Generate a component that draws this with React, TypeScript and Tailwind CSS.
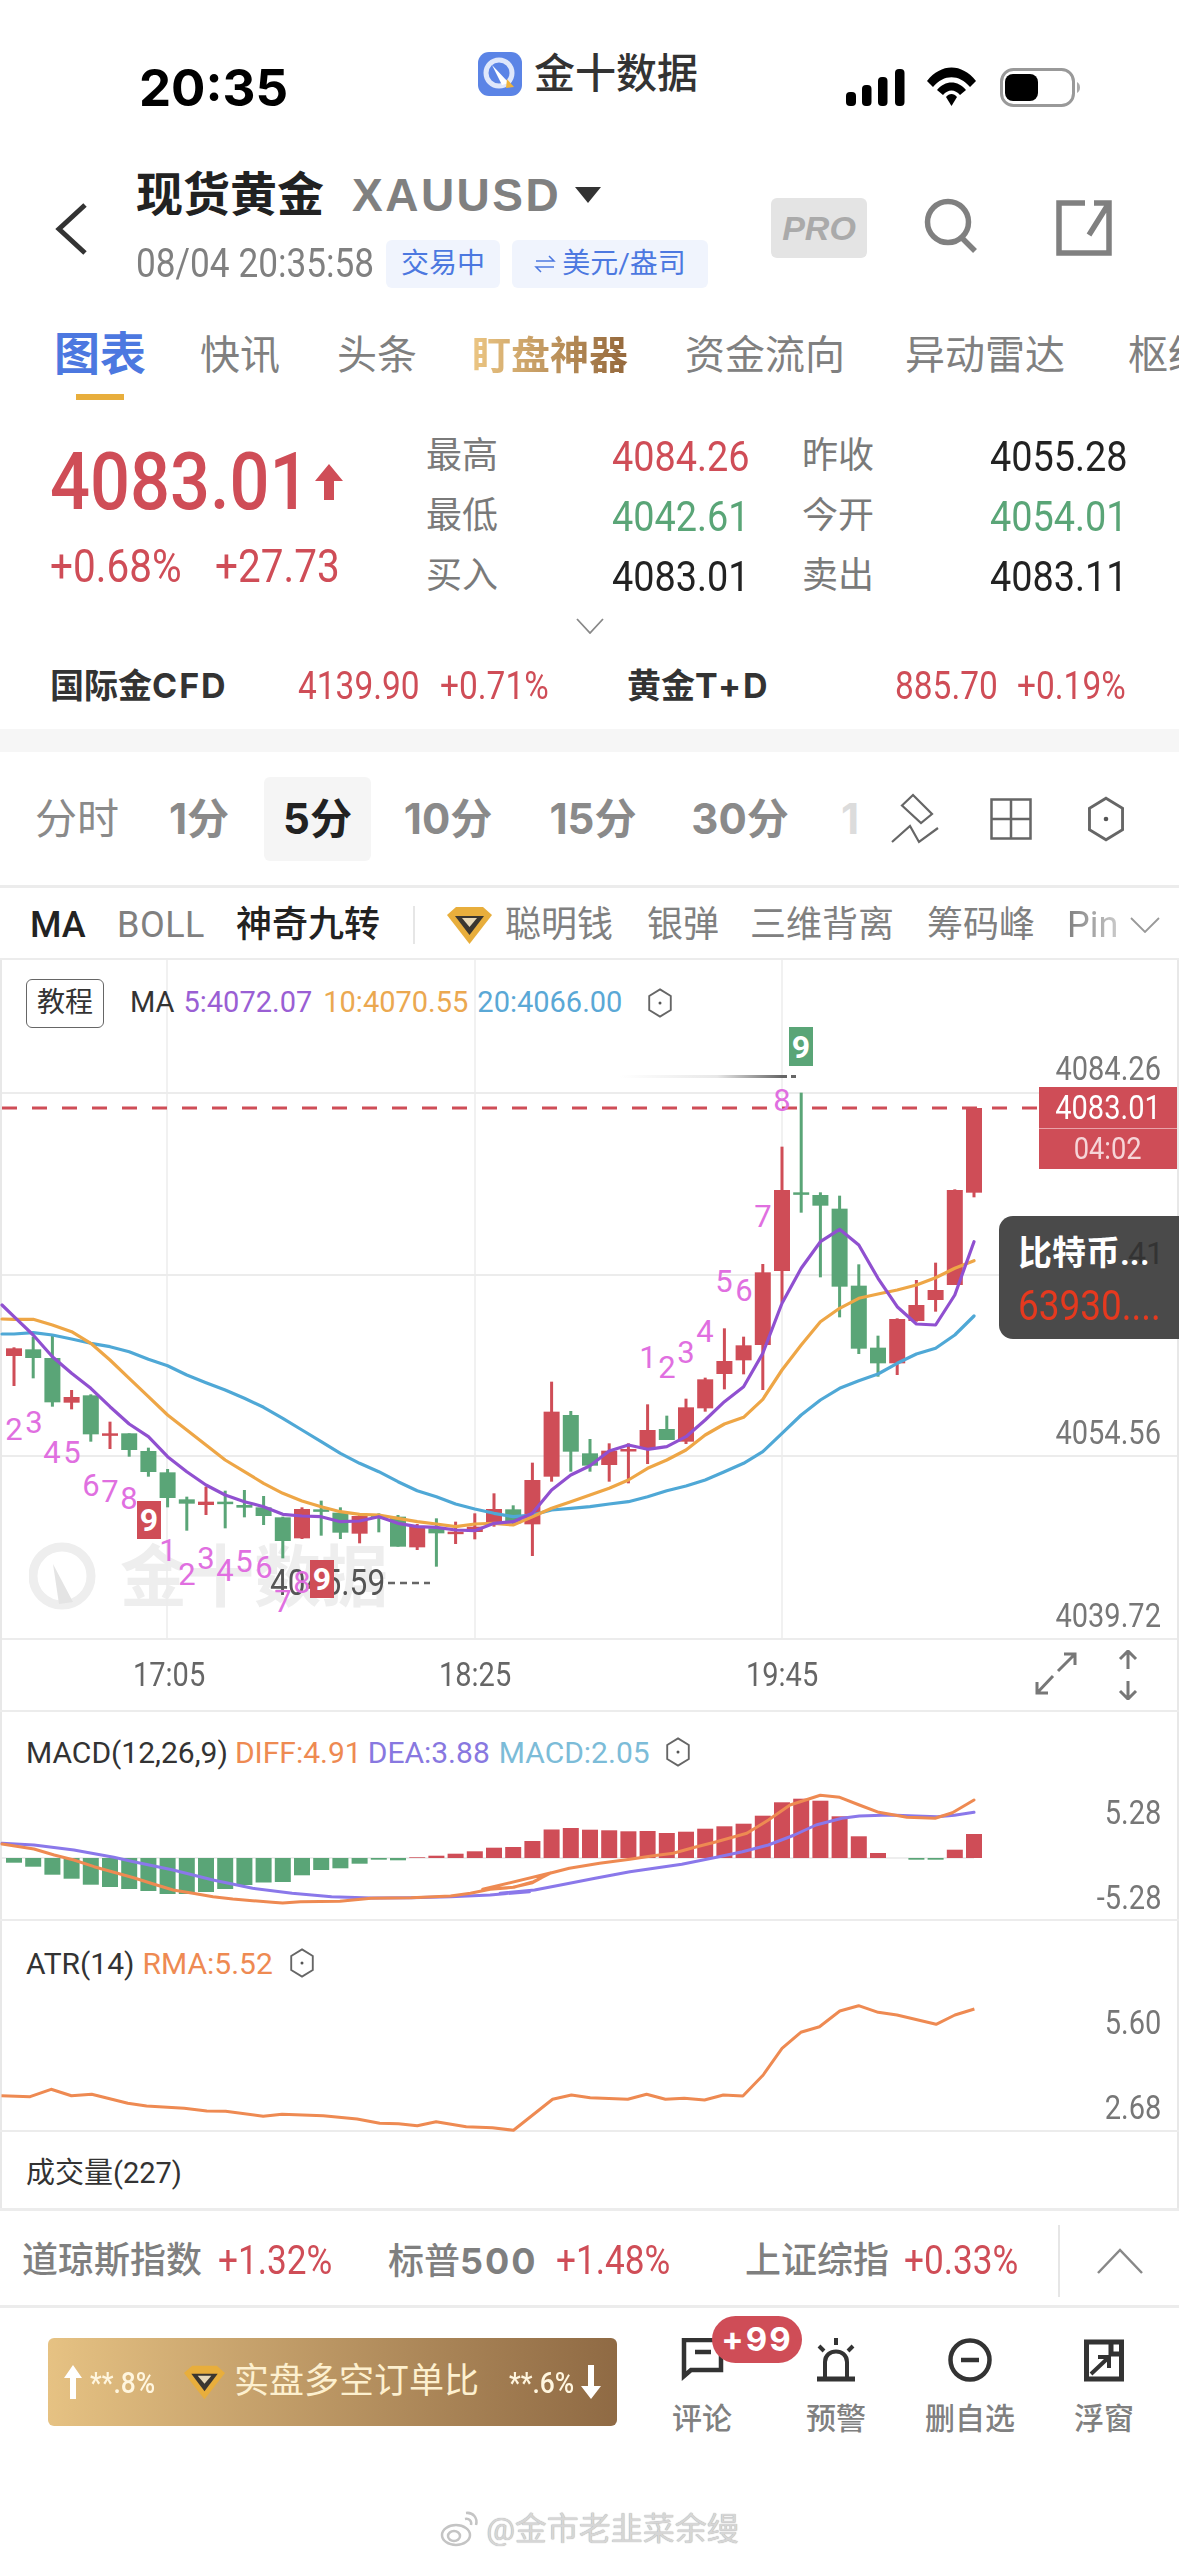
import React from "react";

const RED = "#cf4d57";
const GREEN = "#5aa577";

// y values below are (pageY - 1300) * 3, read off the reference
const candles: [number, number, number, number, number][] = [
  [1, 142, 145, 168, 258], [0, 110, 148, 174, 235], [0, 105, 174, 307, 320], [1, 270, 291, 308, 328],
  [0, 283, 286, 403, 425], [1, 365, 400, 404, 447], [0, 400, 400, 450, 470], [0, 443, 453, 516, 530],
  [0, 507, 517, 594, 622], [0, 590, 598, 611, 692], [1, 560, 605, 615, 645], [0, 572, 605, 612, 685],
  [0, 570, 615, 623, 652], [0, 588, 622, 648, 675], [0, 650, 652, 723, 775], [1, 622, 627, 715, 717],
  [0, 602, 628, 632, 707], [0, 622, 638, 698, 717], [1, 645, 648, 701, 730], [0, 640, 645, 650, 697],
  [0, 645, 650, 740, 740], [1, 672, 678, 742, 750], [0, 655, 685, 700, 800], [1, 665, 695, 702, 732],
  [1, 640, 680, 696, 718], [1, 580, 627, 668, 680], [0, 616, 628, 670, 672], [1, 488, 540, 673, 768],
  [1, 245, 335, 530, 545], [0, 333, 345, 455, 515], [0, 417, 460, 497, 515], [1, 430, 452, 495, 545],
  [1, 430, 447, 449, 550], [1, 313, 390, 445, 492], [0, 347, 387, 420, 420], [1, 296, 322, 425, 432],
  [1, 233, 238, 325, 335], [1, 85, 183, 222, 268], [1, 110, 136, 181, 223], [1, -108, -83, 135, 270],
  [1, -460, -330, -87, 8], [0, -622, -323, -321, -262], [0, -323, -315, -283, -68], [0, -313, -274, -40, 52],
  [0, -107, -43, 146, 162], [0, 107, 143, 190, 230], [1, 55, 57, 190, 225], [1, -60, 15, 63, 65],
  [1, -112, -30, 0, 35], [1, -332, -330, -45, -45], [1, -578, -576, -322, -308],
];

const purple = [50, 105, 170, 220, 265, 320, 372, 410, 470, 515, 555, 585, 605, 620, 643, 648, 650, 665, 663, 650, 670, 680, 682, 690, 692, 670, 665, 640, 570, 525, 497, 453, 435, 448, 440, 410, 360, 305, 260, 160, 10, -95, -175, -212, -165, -65, 20, 72, 75, -15, -175];
const orange = [58, 58, 75, 95, 130, 180, 235, 290, 345, 390, 435, 480, 515, 550, 580, 603, 620, 635, 643, 645, 655, 665, 672, 680, 672, 670, 675, 650, 625, 605, 585, 565, 540, 505, 480, 450, 405, 372, 352, 298, 210, 135, 65, 25, -5, -18, -30, -45, -67, -95, -118];
const blue = [102, 98, 105, 117, 130, 140, 155, 178, 197, 225, 248, 270, 295, 322, 355, 390, 425, 460, 490, 515, 545, 572, 590, 612, 627, 640, 650, 645, 630, 625, 620, 612, 605, 590, 572, 558, 540, 515, 490, 455, 400, 345, 300, 265, 242, 222, 190, 162, 145, 105, 48];

const macdBars = [-4.7, -8.7, -16.7, -20.7, -26.7, -29, -31, -33, -36, -36, -34, -31, -27, -24.5, -24, -17.3, -12, -10.3, -5.7, -1.7, -2.3, 0.7, 2.3, 4.3, 6.7, 10.3, 11, 17, 28.5, 30, 28.3, 27.7, 26.7, 27, 25, 26.3, 29.3, 31.7, 34.3, 42.3, 55.7, 59.3, 57.3, 41.7, 21.7, 5, 0, -1.7, -1.7, 8.3, 24];

const diffA = [[5, 432], [86, 447], [137, 465], [187, 480], [238, 500], [288, 517], [338, 533], [388, 552], [438, 570], [488, 580], [539, 590], [589, 597], [639, 602], [689, 607], [715, 609], [760, 605], [860, 604], [939, 595], [1040, 593], [1140, 588], [1190, 580], [1240, 568], [1300, 562], [1350, 545], [1395, 518]];
const diffB = [[-40, 868], [0, 865], [30, 862], [75, 848], [115, 820], [160, 805], [230, 790], [300, 778], [350, 768], [400, 760], [450, 742], [500, 725], [570, 700], [620, 660], [670, 615], [740, 586], [785, 592], [830, 615], [875, 637], [940, 652], [1005, 655], [1045, 638], [1095, 600]];
const deaA = [[5, 430], [86, 435], [187, 450], [288, 472], [338, 485], [438, 510], [539, 540], [639, 565], [739, 580], [839, 590], [939, 594], [1040, 593], [1140, 590], [1240, 585], [1340, 575]];
const deaB = [[0, 880], [80, 870], [140, 855], [220, 835], [300, 815], [420, 793], [500, 772], [560, 755], [620, 735], [680, 705], [730, 675], [790, 655], [830, 648], [900, 645], [960, 648], [1010, 650], [1050, 646], [1095, 637]];

const atr = [[2, 527], [40, 530], [68, 508], [95, 527], [122, 523], [170, 550], [195, 558], [245, 565], [275, 573], [300, 574], [350, 589], [375, 583], [430, 587], [475, 597], [505, 610], [530, 611], [555, 617], [580, 605], [620, 620], [655, 623], [683, 631], [735, 538], [760, 525], [785, 533], [835, 538], [860, 523], [885, 538], [910, 535], [937, 540], [962, 525], [988, 528], [1015, 465], [1040, 385], [1065, 337], [1090, 320], [1117, 273], [1142, 257], [1168, 277], [1193, 285], [1245, 313], [1270, 285], [1296, 267]];

// magic nine counters: [label, x, y]
const nines: [string, number, number][] = [
  ["2", 14, 1430], ["3", 34, 1423], ["4", 52, 1453], ["5", 72, 1453], ["6", 91, 1486], ["7", 110, 1492], ["8", 129, 1499],
  ["1", 168, 1551], ["2", 187, 1575], ["3", 206, 1559], ["4", 225, 1571], ["5", 244, 1562], ["6", 264, 1568], ["7", 283, 1602], ["8", 302, 1583],
  ["1", 648, 1358], ["2", 667, 1368], ["3", 686, 1353], ["4", 705, 1332], ["5", 724, 1282], ["6", 744, 1291], ["7", 763, 1217], ["8", 782, 1101],
];

const cx = (i: number) => 14 + 19.2 * i;
const toPath = (pts: number[][]) => pts.map((p, i) => `${i ? "L" : "M"}${p[0].toFixed(1)} ${p[1].toFixed(1)}`).join(" ");
const maPath = (vals: number[], start: number[]) =>
  toPath([start, ...vals.map((v, i) => [cx(i), 1300 + v / 3])]);

const Din = ({
  children,
  className = "",
  align = "l",
}: {
  children: React.ReactNode;
  className?: string;
  align?: "l" | "r" | "c";
}) => {
  const origin = align === "l" ? "origin-left" : align === "r" ? "origin-right" : "origin-center";
  return <span className={`inline-block whitespace-nowrap scale-x-[0.88] ${origin} ${className}`}>{children}</span>;
};

const Hex = ({ className = "" }: { className?: string }) => (
  <svg viewBox="0 0 26 32" className={className} fill="none" stroke="#666" strokeWidth="2">
    <path d="M13 1.5 24.5 8.5V23.5L13 30.5 1.5 23.5V8.5Z" />
    <circle cx="13" cy="16" r="1.6" fill="#555" stroke="none" />
  </svg>
);

const Diamond = ({ className = "" }: { className?: string }) => (
  <svg viewBox="0 0 45 37" className={className}>
    <path d="M0 8 9 0H36L45 8 22.5 37Z" fill="#e8ae3c" />
    <path d="M8 9H37L22.5 28Z" fill="#3a3630" />
    <path d="M15 11H30L22.5 20Z" fill="#e8d9b8" />
  </svg>
);

const StatusBar = () => (
  <div className="flex h-[170px] items-start">
    <div className="ml-[139px] mt-[59px] w-[339px] text-[51px] font-bold leading-[58px] text-black [font-family:Inter,sans-serif]">
      20:35
    </div>
    <div className="mt-[52px] flex h-[44px] w-[367px] items-center">
      <svg viewBox="0 0 44 44" className="h-[44px] w-[44px]">
        <rect width="44" height="44" rx="11" fill="#5b84e6" />
        <circle cx="21" cy="21" r="13" fill="none" stroke="#dfe7fb" strokeWidth="5" />
        <path d="M14 13 31 31 24 33Z" fill="#fff" />
        <path d="M29 27 36 35 28 36Z" fill="#f0b43c" />
      </svg>
      <span className="ml-[12px] text-[41px] font-medium leading-[44px] text-[#333]">金十数据</span>
    </div>
    <svg viewBox="845 60 240 55" className="mt-[60px] h-[55px] w-[240px]">
      <rect x="846" y="92" width="10" height="14" rx="4" />
      <rect x="862" y="85" width="9.5" height="21" rx="4" />
      <rect x="878" y="77" width="9.5" height="29" rx="4" />
      <rect x="895" y="69" width="9.5" height="37" rx="4" />
      <path d="M927 81C941 63 962 63 976 81L970 87C959 74 944 74 933 87Z" />
      <path d="M937 90C945 80 958 80 966 90L960 95C955 89 948 89 943 95Z" />
      <path d="M946 97C949 93 954 93 957 97L951.5 106Z" />
      <rect x="1001.5" y="69.5" width="72" height="36" rx="12" fill="none" stroke="#999" strokeWidth="3" />
      <rect x="1005" y="74" width="33" height="27" rx="8" />
      <path d="M1077 82C1081 84 1081 91 1077 93Z" fill="#aaa" />
    </svg>
  </div>
);

const Header = () => (
  <div className="flex h-[130px] items-start">
    <svg viewBox="0 0 33 52" className="ml-[55px] mt-[33px] h-[52px] w-[33px]" fill="none" stroke="#333" strokeWidth="5">
      <path d="M30 2 4 26 30 50" />
    </svg>
    <div className="ml-[48px] w-[635px]">
      <div className="flex h-[50px] items-center">
        <span className="text-[47px] font-bold leading-[50px] text-[#222]">现货黄金</span>
        <span className="ml-[28px] text-[46px] font-bold leading-[50px] tracking-[2.5px] text-[#808080] [font-family:'Liberation_Sans',sans-serif]">
          XAUUSD
        </span>
        <svg viewBox="0 0 26 16" className="ml-[14px] h-[16px] w-[26px]">
          <path d="M0 0H26L13 16Z" fill="#333" />
        </svg>
      </div>
      <div className="mt-[20px] flex h-[48px] items-center">
        <div className="w-[250px]">
          <Din className="text-[40px] leading-[48px] text-[#808080]">08/04 20:35:58</Din>
        </div>
        <span className="flex h-[48px] w-[114px] items-center justify-center rounded-[6px] bg-[#f0f4fd] text-[28px] text-[#4c78e0]">
          交易中
        </span>
        <span className="ml-[12px] flex h-[48px] w-[196px] items-center justify-center rounded-[6px] bg-[#f0f4fd] text-[28px] text-[#4c78e0]">
          <svg viewBox="0 0 22 22" className="mr-[6px] h-[22px] w-[22px]" fill="none" stroke="#4c78e0" strokeWidth="1.5">
            <path d="M2 8H20L15 3M20 14H2L7 19" />
          </svg>
          美元/盎司
        </span>
      </div>
    </div>
    <div className="mt-[28px] flex h-[60px] w-[96px] items-center justify-center rounded-[6px] bg-[#e4e4e4] text-[34px] font-bold italic text-[#aaa] [font-family:'Liberation_Sans',sans-serif]">
      PRO
    </div>
    <svg viewBox="0 0 54 56" className="ml-[57px] mt-[27px] h-[56px] w-[54px]" fill="none" stroke="#808080" strokeWidth="5.5">
      <circle cx="24" cy="25" r="20.5" />
      <path d="M38 41 51 54" />
    </svg>
    <svg viewBox="0 0 56 56" className="ml-[78px] mt-[30px] h-[56px] w-[56px]" fill="none" stroke="#808080" strokeWidth="5.5">
      <path d="M29 3H3V53H53V3H38M53 3 33 35" />
    </svg>
  </div>
);

const Tabs = () => (
  <div className="flex h-[110px] items-start gap-[57px] pl-[54px] text-[40px] leading-[50px] text-[#808080] whitespace-nowrap">
    <div className="-mr-[3px] mt-[29px] flex flex-col items-center">
      <span className="text-[46px] font-bold text-[#4c78e0]">图表</span>
      <span className="mt-[15px] h-[6px] w-[48px] bg-[#e8ae3c]" />
    </div>
    <span className="mt-[31px]">快讯</span>
    <span className="mt-[31px]">头条</span>
    <span className="-ml-[2px] mt-[31px] bg-linear-to-r from-[#ecc683] to-[#94683c] bg-clip-text text-[39px] font-bold text-transparent">
      盯盘神器
    </span>
    <span className="mt-[31px]">资金流向</span>
    <span className="ml-[3px] mt-[31px]">异动雷达</span>
    <span className="ml-[6px] mt-[31px]">枢纽</span>
  </div>
);

const quoteRows: [string, string, string, string, string, string][] = [
  ["最高", "4084.26", "text-[#cf4d57]", "昨收", "4055.28", "text-[#222]"],
  ["最低", "4042.61", "text-[#5aa577]", "今开", "4054.01", "text-[#5aa577]"],
  ["买入", "4083.01", "text-[#222]", "卖出", "4083.11", "text-[#222]"],
];

const Quote = () => (
  <div className="h-[230px] pt-[16px]">
    <div className="flex">
      <div className="w-[426px] pl-[50px]">
        <div className="flex h-[112px] items-center">
          <div className="w-[265px]">
            <Din className="text-[80px] font-medium leading-[112px] text-[#cf4d57]">4083.01</Din>
          </div>
          <svg viewBox="0 0 28 36" className="h-[36px] w-[28px]">
            <path d="M14 0 28 17H19V36H9V17H0Z" fill="#cf4d57" />
          </svg>
        </div>
        <div className="flex h-[56px] items-center text-[46px] leading-[56px] text-[#cf4d57]">
          <div className="w-[165px]">
            <Din>+0.68%</Din>
          </div>
          <Din>+27.73</Din>
        </div>
      </div>
      <div className="w-[702px]">
        {quoteRows.map((r) => (
          <div key={r[0]} className="flex h-[60px] items-center">
            <span className="w-[186px] text-[36px] text-[#7a7a7a]">{r[0]}</span>
            <div className="w-[190px]">
              <Din className={`text-[43px] ${r[2]}`}>{r[1]}</Din>
            </div>
            <span className="w-[188px] text-[36px] text-[#7a7a7a]">{r[3]}</span>
            <div className="w-[138px]">
              <Din className={`text-[43px] ${r[5]}`}>{r[4]}</Din>
            </div>
          </div>
        ))}
      </div>
    </div>
    <div className="mt-[12px] flex justify-center">
      <svg viewBox="0 0 28 16" className="h-[16px] w-[28px]" fill="none" stroke="#888" strokeWidth="1.8">
        <path d="M1 1 14 15 27 1" />
      </svg>
    </div>
  </div>
);

const SubQuote = () => (
  <div className="flex h-[89px] items-start pt-[23px] whitespace-nowrap">
    <span className="ml-[50px] w-[248px] text-[34px] font-bold leading-[46px] text-[#333]">
      国际金<span className="tracking-[2px] [font-family:Inter,sans-serif]">CFD</span>
    </span>
    <div className="w-[142px]">
      <Din className="text-[38px] leading-[46px] text-[#cf4d57]">4139.90</Din>
    </div>
    <div className="w-[187px]">
      <Din className="text-[38px] leading-[46px] text-[#cf4d57]">+0.71%</Din>
    </div>
    <span className="w-[268px] text-[34px] font-bold leading-[46px] text-[#333]">
      黄金<span className="tracking-[2px] [font-family:Inter,sans-serif]">T+D</span>
    </span>
    <div className="w-[122px]">
      <Din className="text-[38px] leading-[46px] text-[#cf4d57]">885.70</Din>
    </div>
    <Din className="text-[38px] leading-[46px] text-[#cf4d57]">+0.19%</Din>
  </div>
);

const Periods = () => (
  <div className="flex h-[136px] items-center border-b-[3px] border-[#ececec] pl-[20px] text-[42px] font-bold text-[#8a8a8a] whitespace-nowrap [font-family:Inter,'Noto_Sans_CJK_SC',sans-serif]">
    <span className="w-[114px] text-center font-normal">分时</span>
    <span className="w-[130px] text-center">1分</span>
    <span className="flex h-[84px] w-[107px] items-center justify-center rounded-[6px] bg-[#f5f5f5] text-[#222]">5分</span>
    <span className="w-[154px] text-center">10分</span>
    <span className="w-[136px] text-center">15分</span>
    <span className="w-[158px] text-center">30分</span>
    <span className="w-[62px] text-center text-[#dcdcdc]">1</span>
    <svg viewBox="890 792 50 52" className="ml-[9px] h-[52px] w-[50px]" fill="none" stroke="#666" strokeWidth="2.2">
      <path d="M902 804.5 913 794 932 813 921 822Z" />
      <path d="M892 841 910 825 919 841 938 827" />
    </svg>
    <svg viewBox="0 0 42 42" className="ml-[50px] h-[42px] w-[42px]" fill="none" stroke="#666" strokeWidth="2.5">
      <path d="M1.5 1.5H40.5V40.5H1.5ZM21 1.5V40.5M1.5 21H40.5" />
    </svg>
    <Hex className="ml-[54px] h-[46px] w-[40px]" />
  </div>
);

const Indicators = () => (
  <div className="flex h-[72px] items-center border-b-[2px] border-[#ececec] pl-[30px] pt-[4px] text-[36px] text-[#808080] whitespace-nowrap">
    <span className="w-[87px] font-medium text-[#222]">MA</span>
    <span className="w-[119px] tracking-[0.5px]">BOLL</span>
    <span className="w-[177px] font-medium text-[#222]">神奇九转</span>
    <span className="h-[38px] w-[2px] bg-[#e6e6e6]" />
    <Diamond className="ml-[32px] h-[37px] w-[45px]" />
    <span className="ml-[13px] w-[142px]">聪明钱</span>
    <span className="w-[103px]">银弹</span>
    <span className="w-[177px]">三维背离</span>
    <span className="w-[140px]">筹码峰</span>
    <span className="w-[63px] bg-linear-to-r from-[#808080] to-[#dddddd] bg-clip-text text-transparent">Pin</span>
    <svg viewBox="0 0 30 16" className="h-[16px] w-[30px]" fill="none" stroke="#999" strokeWidth="1.8">
      <path d="M1 1 15 15 29 1" />
    </svg>
  </div>
);

const PriceChart = () => (
  <div className="relative h-[752px] border-b-[2px] border-[#ececec] shadow-[inset_2px_0_0_#e8e8e8,inset_-2px_0_0_#e8e8e8]">
    {/* watermark sits under the candles */}
    <div className="absolute left-[29px] top-[582px] flex items-center">
      <svg viewBox="0 0 67 72" className="h-[72px] w-[67px]" fill="none" stroke="#eeeeee" strokeWidth="9">
        <circle cx="33" cy="34" r="29" />
        <path d="M24 22 44 60 30 62Z" fill="#e4e4e4" stroke="none" />
      </svg>
      <span className="ml-[24px] text-[67px] font-bold leading-[72px] text-[#eeeeee]">金十数据</span>
    </div>
    <svg viewBox="0 960 1179 752" className="absolute left-0 top-0 h-[752px] w-[1179px]">
      {[167, 475, 782].map((x) => (
        <line key={x} x1={x} x2={x} y1="960" y2="1639" stroke="#ececec" strokeWidth="1.5" />
      ))}
      {[1093, 1275, 1456, 1639].map((y) => (
        <line key={y} x1="2" x2="1177" y1={y} y2={y} stroke="#ececec" strokeWidth="2" />
      ))}
      <line x1="2" x2="1039" y1="1108" y2="1108" stroke={RED} strokeWidth="3" strokeDasharray="15 15" />
      <defs>
        <linearGradient id="fade" x1="0" x2="1" y1="0" y2="0">
          <stop offset="0" stopColor="#ffffff" />
          <stop offset="0.6" stopColor="#e8e8e8" />
          <stop offset="1" stopColor="#666666" />
        </linearGradient>
      </defs>
      <rect x="620" y="1075" width="162" height="3" fill="url(#fade)" />
      <line x1="782" x2="796" y1="1076.5" y2="1076.5" stroke="#666" strokeWidth="3" strokeDasharray="5 4" />
      {candles.map(([up, wt, bt, bb, wb], i) => {
        const c = up ? RED : GREEN;
        const x = cx(i);
        return (
          <g key={i}>
            <rect x={x - 1.5} width="3" y={1300 + wt / 3} height={(wb - wt) / 3} fill={c} />
            <rect x={x - 8} width="16" y={1300 + bt / 3} height={Math.max((bb - bt) / 3, 2.5)} fill={c} />
          </g>
        );
      })}
      <g fill="none" strokeWidth="3.2" strokeLinejoin="round" strokeLinecap="round">
        <path d={maPath(blue, [2, 1334])} stroke="#4fa8d6" />
        <path d={maPath(orange, [2, 1319])} stroke="#eea646" />
        <path d={maPath(purple, [2, 1305])} stroke="#9050d0" />
      </g>
      <line x1="388" x2="430" y1="1583" y2="1583" stroke="#666" strokeWidth="2.5" strokeDasharray="7 5" />
    </svg>
    <span className="absolute left-[270px] top-[603px] text-[36px] leading-[40px] text-[#555]">
      <Din>4045.59</Din>
    </span>
    {nines.map(([n, x, y], i) => (
      <span
        key={i}
        className="absolute w-[24px] -translate-x-1/2 -translate-y-1/2 text-center text-[31px] leading-[30px] text-[#e06fe0]"
        style={{ left: x, top: y - 960 }}
      >
        {n}
      </span>
    ))}
    <span className="absolute left-[137px] top-[541px] flex h-[38px] w-[24px] items-center justify-center bg-[#cf4d57] text-[32px] font-bold text-white">9</span>
    <span className="absolute left-[310px] top-[600px] flex h-[38px] w-[24px] items-center justify-center bg-[#cf4d57] text-[32px] font-bold text-white">9</span>
    <span className="absolute left-[789px] top-[67px] flex h-[39px] w-[24px] items-center justify-center bg-[#5aa577] text-[32px] font-bold text-white">9</span>

    <div className="relative flex h-[86px] items-center pl-[26px] text-[29px] whitespace-nowrap">
      <span className="flex h-[49px] w-[78px] items-center justify-center rounded-[6px] border-[1.5px] border-[#666] text-[28px] text-[#333]">
        教程
      </span>
      <span className="ml-[26px] text-[#333]">MA</span>
      <span className="ml-[9px] text-[#9a5fd4]">5:4072.07</span>
      <span className="ml-[11px] text-[#eba850]">10:4070.55</span>
      <span className="ml-[9px] text-[#5aa8d6]">20:4066.00</span>
      <Hex className="ml-[25px] h-[30px] w-[26px]" />
    </div>

    <div className="absolute right-[18px] top-[90px] text-[33px] leading-[38px] text-[#777]">
      <Din align="r">4084.26</Din>
    </div>
    <div className="absolute right-[18px] top-[454px] text-[33px] leading-[38px] text-[#777]">
      <Din align="r">4054.56</Din>
    </div>
    <div className="absolute right-[18px] top-[637px] text-[33px] leading-[38px] text-[#777]">
      <Din align="r">4039.72</Din>
    </div>
    <div className="absolute left-[1039px] top-[127px] w-[138px] bg-[#cf4d57] text-center text-[33px]">
      <div className="h-[42px] border-b-[1.5px] border-[#e9a3a9] leading-[41px] text-white">
        <Din align="c">4083.01</Din>
      </div>
      <div className="h-[40px] text-[31px] leading-[40px] text-[#f6d5d8]">
        <Din align="c">04:02</Din>
      </div>
    </div>
    <div className="absolute right-0 top-[256px] h-[123px] w-[180px] rounded-l-[14px] bg-[#4a4a4a] pl-[19px] pt-[14px] whitespace-nowrap">
      <div className="relative text-[34px] font-bold leading-[46px] text-white">
        比特币...
        <span className="absolute left-[110px] top-[0px] text-[32px] font-normal text-[#333]">41</span>
      </div>
      <Din className="mt-[6px] text-[42px] leading-[48px] text-[#e5391f]">63930....</Din>
    </div>

    {[
      ["17:05", 169],
      ["18:25", 475],
      ["19:45", 782],
    ].map(([t, x]) => (
      <div
        key={t as string}
        className="absolute top-[695px] w-[100px] -translate-x-1/2 text-center text-[33px] leading-[40px] text-[#666]"
        style={{ left: x as number }}
      >
        <Din align="c">{t}</Din>
      </div>
    ))}
    <svg viewBox="1035 1650 105 50" className="absolute left-[1035px] top-[690px] h-[50px] w-[105px]" fill="none" stroke="#777" strokeWidth="3">
      <path d="M1058 1671 1075 1654M1064 1654H1075V1665M1053 1676 1037 1693M1037 1682V1693H1048" />
      <path d="M1128 1651V1669M1120 1659 1128 1651 1136 1659M1128 1681V1699M1120 1691 1128 1699 1136 1691" />
    </svg>
  </div>
);

const MacdPanel = () => (
  <div className="relative h-[209px] border-b-[2px] border-[#ececec] shadow-[inset_2px_0_0_#e8e8e8,inset_-2px_0_0_#e8e8e8]">
    <svg viewBox="0 1712 1179 209" className="absolute left-0 top-0 h-[209px] w-[1179px]">
      <line x1="2" x2="974" y1="1858" y2="1858" stroke="#e8e8e8" strokeWidth="1.5" />
      {macdBars.map((h, i) =>
        h === 0 ? null : (
          <rect
            key={i}
            x={cx(i) - 8}
            width="16"
            y={h > 0 ? 1858 - h : 1858}
            height={Math.abs(h)}
            fill={h > 0 ? RED : GREEN}
          />
        )
      )}
      <g fill="none" strokeWidth="3" strokeLinejoin="round" strokeLinecap="round">
        <path
          d={toPath([
            ...deaA.map(([x, y]) => [x / 2.53, 1700 + y / 3]),
            ...deaB.map(([x, y]) => [500 + x / 2.31, 1600 + y / 3]),
          ])}
          stroke="#8a78ea"
        />
        <path
          d={toPath([
            ...diffA.map(([x, y]) => [x / 2.53, 1700 + y / 3]),
            ...diffB.map(([x, y]) => [500 + x / 2.31, 1600 + y / 3]),
          ])}
          stroke="#ee8a52"
        />
      </g>
    </svg>
    <div className="relative flex h-[80px] items-center pl-[26px] text-[30px] whitespace-nowrap">
      <span className="text-[#333]">MACD(12,26,9)</span>
      <span className="ml-[7px] text-[#ee8a52]">DIFF:4.91</span>
      <span className="ml-[6px] text-[#8878e0]">DEA:3.88</span>
      <span className="ml-[9px] text-[#7cbcd8]">MACD:2.05</span>
      <Hex className="ml-[15px] h-[30px] w-[26px]" />
    </div>
    <div className="absolute right-[18px] top-[82px] text-[33px] leading-[38px] text-[#777]">
      <Din align="r">5.28</Din>
    </div>
    <div className="absolute right-[18px] top-[167px] text-[33px] leading-[38px] text-[#777]">
      <Din align="r">-5.28</Din>
    </div>
  </div>
);

const AtrPanel = () => (
  <div className="relative h-[211px] border-b-[2px] border-[#ececec] shadow-[inset_2px_0_0_#e8e8e8,inset_-2px_0_0_#e8e8e8]">
    <svg viewBox="0 1921 1179 211" className="absolute left-0 top-0 h-[211px] w-[1179px]">
      <path
        d={toPath(atr.map(([x, y]) => [x / 1.33, 1920 + y / 3]))}
        fill="none"
        stroke="#ee8a52"
        strokeWidth="3"
        strokeLinejoin="round"
      />
    </svg>
    <div className="relative flex h-[84px] items-center pl-[26px] text-[30px] whitespace-nowrap">
      <span className="text-[#333]">ATR(14)</span>
      <span className="ml-[8px] text-[#ee8a52]">RMA:5.52</span>
      <Hex className="ml-[16px] h-[30px] w-[26px]" />
    </div>
    <div className="absolute right-[18px] top-[83px] text-[33px] leading-[38px] text-[#777]">
      <Din align="r">5.60</Din>
    </div>
    <div className="absolute right-[18px] top-[168px] text-[33px] leading-[38px] text-[#777]">
      <Din align="r">2.68</Din>
    </div>
  </div>
);

const Volume = () => (
  <div className="flex h-[79px] items-start border-b-[3px] border-[#ececec] pl-[26px] pt-[21px] text-[29px] leading-[40px] text-[#333] shadow-[inset_2px_0_0_#e8e8e8,inset_-2px_0_0_#e8e8e8]">
    成交量(227)
  </div>
);

const Indices = () => (
  <div className="flex h-[97px] items-center border-b-[3px] border-[#ececec] pl-[22px] pt-[6px] text-[36px] font-medium text-[#7f7f7f] whitespace-nowrap">
    <span className="w-[196px]">道琼斯指数</span>
    <div className="w-[170px]">
      <Din className="text-[40px] font-normal text-[#cf4d57]">+1.32%</Din>
    </div>
    <span className="w-[168px]">
      标普<span className="font-bold tracking-[2px] [font-family:Inter,sans-serif]">500</span>
    </span>
    <div className="w-[189px]">
      <Din className="text-[40px] font-normal text-[#cf4d57]">+1.48%</Din>
    </div>
    <span className="w-[159px]">上证综指</span>
    <div className="w-[154px]">
      <Din className="text-[40px] font-normal text-[#cf4d57]">+0.33%</Din>
    </div>
    <span className="h-[72px] w-[2px] bg-[#e6e6e6]" />
    <svg viewBox="0 0 46 26" className="ml-[37px] h-[26px] w-[46px]" fill="none" stroke="#888" strokeWidth="2.5">
      <path d="M1 25 23 2 45 25" />
    </svg>
  </div>
);

const Bottom = () => (
  <div className="flex h-[200px] items-start pl-[48px] pt-[30px]">
    <div className="flex h-[88px] w-[569px] items-center rounded-[6px] bg-linear-to-r from-[#e6c283] to-[#8f6a44] pl-[16px] whitespace-nowrap">
      <svg viewBox="0 0 18 34" className="h-[34px] w-[18px]">
        <path d="M9 0 18 13H12V34H6V13H0Z" fill="#fff" />
      </svg>
      <div className="ml-[8px] w-[94px]">
        <Din className="text-[30px] font-medium text-[#fff6df]">**.8%</Din>
      </div>
      <Diamond className="h-[37px] w-[41px]" />
      <span className="ml-[9px] w-[275px] text-[35px] text-[#fdf0cf]">实盘多空订单比</span>
      <Din className="w-[72px] text-[30px] font-medium text-[#fff6df]">**.6%</Din>
      <svg viewBox="0 0 20 34" className="h-[34px] w-[20px]">
        <path d="M10 34 20 21H13V0H7V21H0Z" fill="#fff" />
      </svg>
    </div>
    <div className="ml-[18px] flex">
      <div className="relative flex w-[134px] flex-col items-center">
        <svg viewBox="0 0 44 44" className="h-[44px] w-[44px]" fill="none" stroke="#333" strokeWidth="4.5">
          <path d="M41 2H4V38L11 32H41V2Z" />
          <path d="M15 14H31" />
        </svg>
        <span className="absolute left-[77px] top-[-22px] flex h-[47px] w-[90px] items-center justify-center rounded-full bg-[#cf4d57] text-[33px] font-bold leading-none tracking-[2px] text-white [font-family:Inter,sans-serif]">
          +99
        </span>
        <span className="mt-[15px] text-[30px] font-medium leading-[44px] text-[#808080]">评论</span>
      </div>
      <div className="flex w-[134px] flex-col items-center">
        <svg viewBox="0 0 42 44" className="h-[44px] w-[42px]" fill="none" stroke="#333" strokeWidth="4">
          <path d="M2 41H40" strokeWidth="5" />
          <path d="M10 41V24C10 10 32 10 32 24V41" />
          <path d="M21 0V7M4 8 9 13M38 8 33 13" />
        </svg>
        <span className="mt-[15px] text-[30px] font-medium leading-[44px] text-[#808080]">预警</span>
      </div>
      <div className="flex w-[134px] flex-col items-center">
        <svg viewBox="0 0 44 44" className="h-[44px] w-[44px]" fill="none" stroke="#333" strokeWidth="4.5">
          <circle cx="22" cy="22" r="19.5" />
          <path d="M13 22H31" />
        </svg>
        <span className="mt-[15px] text-[30px] font-medium leading-[44px] text-[#808080]">删自选</span>
      </div>
      <div className="flex w-[134px] flex-col items-center">
        <svg viewBox="0 0 40 44" className="h-[44px] w-[40px]" fill="none" stroke="#333" strokeWidth="5">
          <path d="M2.5 4H37.5V41H2.5ZM27 4V16H37" />
          <path d="M7 36 24 20M14 19H25V30" strokeWidth="4" />
        </svg>
        <span className="mt-[15px] text-[30px] font-medium leading-[44px] text-[#808080]">浮窗</span>
      </div>
    </div>
  </div>
);

const Mark = () => (
  <div className="-mt-[3px] flex h-[48px] items-center justify-center text-[32px] text-[#d6d6d6] [text-shadow:0_0_1px_#999]">
    <svg viewBox="0 0 40 38" className="mr-[6px] h-[38px] w-[40px]" fill="none" stroke="#c4c4c4" strokeWidth="2.5">
      <ellipse cx="16" cy="25" rx="14" ry="10" />
      <ellipse cx="14" cy="26" rx="6" ry="5" />
      <path d="M26 3C33 2 38 8 36 15M25 9C29 8 32 11 31 15" />
    </svg>
    @金市老韭菜余缦
  </div>
);

export default function App() {
  return (
    <div className="h-[2556px] w-[1179px] overflow-hidden bg-white [font-family:Roboto,'Noto_Sans_CJK_SC',sans-serif]">
      <StatusBar />
      <Header />
      <Tabs />
      <Quote />
      <SubQuote />
      <div className="h-[23px] bg-[#f6f6f6]" />
      <Periods />
      <Indicators />
      <PriceChart />
      <MacdPanel />
      <AtrPanel />
      <Volume />
      <Indices />
      <Bottom />
      <Mark />
    </div>
  );
}
